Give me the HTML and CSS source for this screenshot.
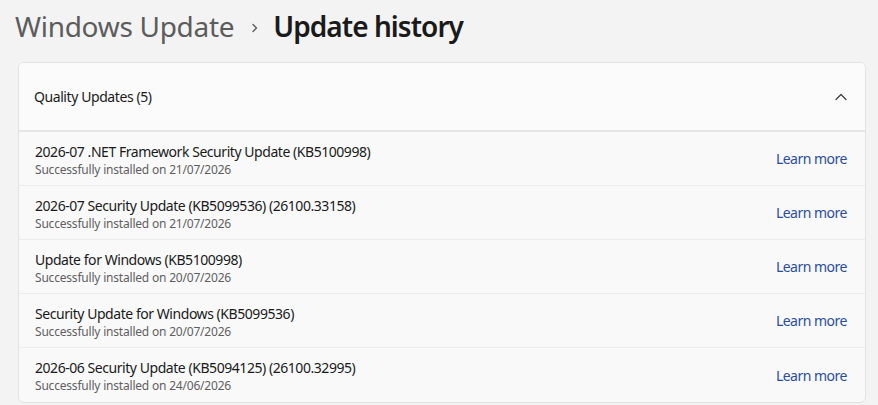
FILE: index.html
```html
<!DOCTYPE html>
<html lang="en">
<head>
<meta charset="utf-8">
<title>Update history</title>
<link rel="stylesheet" href="styles.css">
</head>
<body>
<div class="page">
  <header class="breadcrumb">
    <span class="crumb-parent">Windows Update</span>
    <svg class="crumb-sep" width="10" height="10" viewBox="0 0 10 10"><path d="M3 1.5 L6.5 5 L3 8.5" fill="none" stroke="#5c5c5c" stroke-width="1.4" stroke-linecap="round" stroke-linejoin="round"/></svg>
    <span class="crumb-current">Update history</span>
  </header>

  <section class="card">
    <div class="card-header">
      <span class="card-title">Quality Updates (5)</span>
      <svg class="chevron" width="12" height="8" viewBox="0 0 12 8"><path d="M1 6.5 L6 1.5 L11 6.5" fill="none" stroke="#3a3a3a" stroke-width="1.2" stroke-linecap="round" stroke-linejoin="round"/></svg>
    </div>
    <div class="rows">
      <div class="row">
        <div class="row-text">
          <div class="row-title">2026-07 .NET Framework Security Update (KB5100998)</div>
          <div class="row-sub">Successfully installed on 21/07/2026</div>
        </div>
        <a class="learn" href="#">Learn more</a>
      </div>
      <div class="row">
        <div class="row-text">
          <div class="row-title">2026-07 Security Update (KB5099536) (26100.33158)</div>
          <div class="row-sub">Successfully installed on 21/07/2026</div>
        </div>
        <a class="learn" href="#">Learn more</a>
      </div>
      <div class="row">
        <div class="row-text">
          <div class="row-title">Update for Windows (KB5100998)</div>
          <div class="row-sub">Successfully installed on 20/07/2026</div>
        </div>
        <a class="learn" href="#">Learn more</a>
      </div>
      <div class="row">
        <div class="row-text">
          <div class="row-title">Security Update for Windows (KB5099536)</div>
          <div class="row-sub">Successfully installed on 20/07/2026</div>
        </div>
        <a class="learn" href="#">Learn more</a>
      </div>
      <div class="row">
        <div class="row-text">
          <div class="row-title">2026-06 Security Update (KB5094125) (26100.32995)</div>
          <div class="row-sub">Successfully installed on 24/06/2026</div>
        </div>
        <a class="learn" href="#">Learn more</a>
      </div>
    </div>
  </section>
</div>
</body>
</html>
```

FILE: styles.css
```css
* { box-sizing: border-box; }
html, body { margin: 0; padding: 0; }
body {
  background: #f3f3f3;
  font-family: "Segoe UI", "Noto Sans", "Open Sans", sans-serif;
  color: #1a1a1a;
  width: 878px;
  height: 405px;
  overflow: hidden;
}
.page {
  padding: 0 12px 0 18px;
}
.breadcrumb {
  display: flex;
  align-items: center;
  height: 52px;
  margin-left: -3px;
}
.crumb-parent {
  font-size: 28px;
  color: #5c5c5c;
  letter-spacing: -0.3px;
}
.crumb-sep {
  margin: 4px 13px 0 16px;
}
.crumb-current {
  font-size: 28px;
  font-weight: 600;
  color: #1a1a1a;
  letter-spacing: -0.95px;
}
.card {
  margin-top: 10px;
  width: 848px;
  border: 1px solid #e3e3e3;
  border-radius: 6px;
  background: #f9f9f9;
  overflow: hidden;
}
.card-header {
  height: 69px;
  display: flex;
  align-items: center;
  justify-content: space-between;
  padding: 0 18px 0 15px;
  background: #fbfbfb;
  border-bottom: 2px solid #e6e6e6;
}
.card-title {
  font-size: 14px;
  letter-spacing: -0.42px;
  color: #1a1a1a;
}
.chevron { margin-top: 1px; }
.row {
  height: 54px;
  display: flex;
  align-items: center;
  justify-content: space-between;
  padding: 2px 18px 0 16px;
  border-bottom: 1px solid #ececec;
}
.row:last-child { border-bottom: none; }
.row-title {
  font-size: 14px;
  letter-spacing: -0.45px;
  color: #1a1a1a;
  line-height: 20px;
}
.row-sub {
  font-size: 12px;
  letter-spacing: -0.2px;
  color: #5f5f5f;
  line-height: 16px;
}
.learn {
  font-size: 14px;
  letter-spacing: -0.5px;
  color: #2a4d9c;
  text-decoration: none;
  margin-top: -2px;
}
```
